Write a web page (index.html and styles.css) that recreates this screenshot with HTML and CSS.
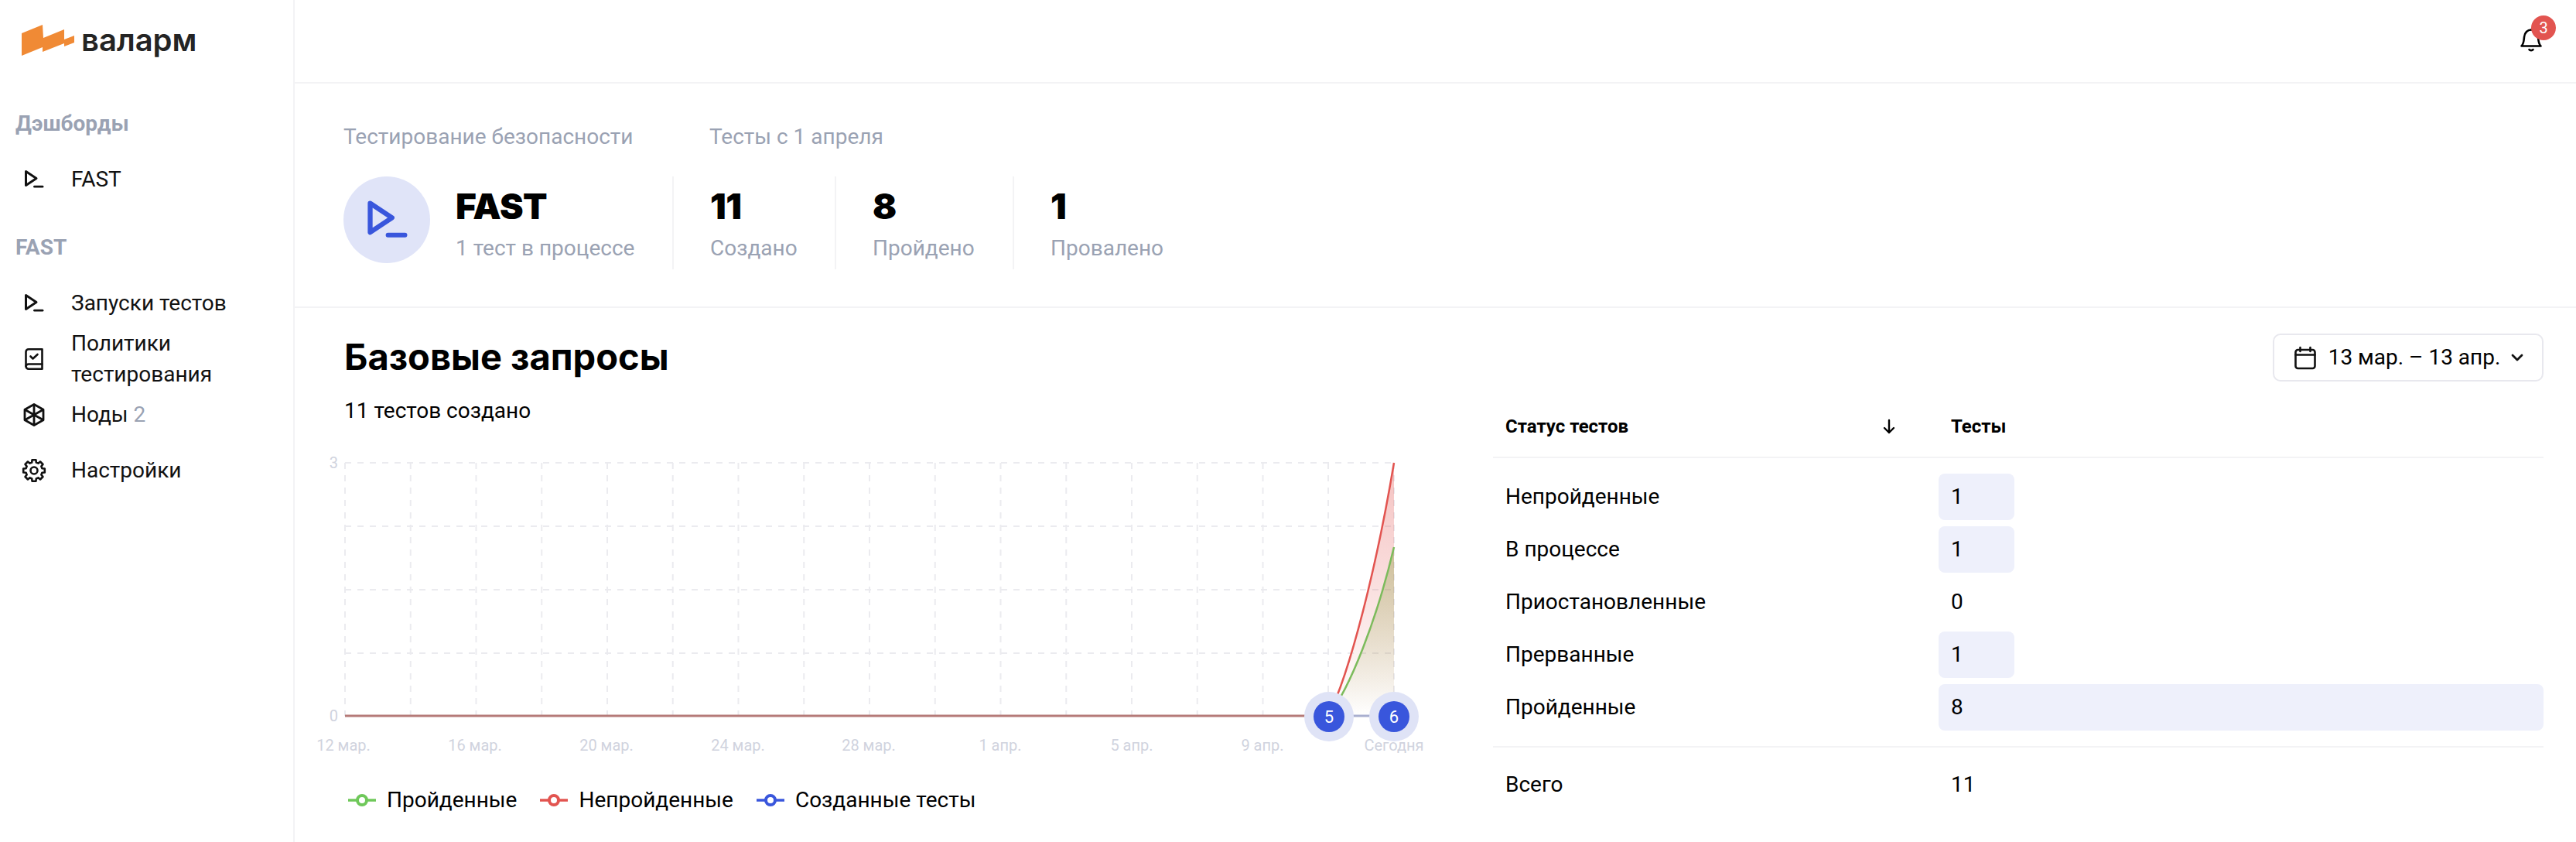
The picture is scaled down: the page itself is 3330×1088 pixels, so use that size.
FILE: index.html
```html
<!DOCTYPE html>
<html lang="ru">
<head>
    <meta charset="UTF-8">
    <meta name="viewport" content="width=device-width, initial-scale=1.0">
    <title>Валарм FAST</title>
    <link rel="stylesheet" href="styles.css">
</head>
<body>
    <svg class="defs" width="0" height="0">
        <symbol id="terminal" viewBox="0 0 32 32">
            <path d="M5.5 5.5 L19 14.5 L5.5 23.5 Z" fill="none" stroke="currentColor" stroke-width="3" stroke-linejoin="round"/>
            <path d="M16.5 25.2 H27" fill="none" stroke="currentColor" stroke-width="2.8" stroke-linecap="round"/>
        </symbol>
    </svg>

    <aside class="sidebar">
        <div class="logo">
            <svg class="logo-mark" width="68" height="40" viewBox="28 32 68 40">
                <path d="M28 43 L55 32 L56 49 L83 38 L83 51 L96 46 L96 55 L83 60 L83 56 L55 67 L55 61 L28 72 Z" fill="#f08a35"/>
            </svg>
            <span class="logo-text">валарм</span>
        </div>

        <div class="nav-title">Дэшборды</div>
        <a class="nav-item">
            <svg class="nav-icon"><use href="#terminal"/></svg>
            <span>FAST</span>
        </a>

        <div class="nav-title nav-title-next">FAST</div>
        <a class="nav-item">
            <svg class="nav-icon"><use href="#terminal"/></svg>
            <span>Запуски тестов</span>
        </a>
        <a class="nav-item">
            <svg class="nav-icon" viewBox="0 0 32 32" fill="none" stroke="currentColor" stroke-width="2.6" stroke-linejoin="round" stroke-linecap="round">
                <path d="M9 3.2 H26.5 V28.8 H9 A3.5 3.5 0 0 1 5.5 25.3 V6.7 A3.5 3.5 0 0 1 9 3.2 Z"/>
                <path d="M5.5 25.3 A3.5 3.5 0 0 1 9 22.5 H26.5"/>
                <path d="M11.5 12.5 L14.5 15.5 L20.5 10"/>
            </svg>
            <span>Политики тестирования</span>
        </a>
        <a class="nav-item">
            <svg class="nav-icon" viewBox="0 0 32 32" fill="none" stroke="currentColor" stroke-width="2.8" stroke-linejoin="round">
                <path d="M16 2.5 L28 9.2 V22.8 L16 29.5 L4 22.8 V9.2 Z"/>
                <path d="M16 2.5 V29.5 M4 9.2 L28 22.8 M28 9.2 L4 22.8"/>
            </svg>
            <span>Ноды <span class="muted">2</span></span>
        </a>
        <a class="nav-item">
            <svg class="nav-icon" viewBox="0 0 32 32" fill="none" stroke="currentColor" stroke-width="2.6" stroke-linejoin="round">
                <path d="M13.2 5.57 L13.57 2.21 H18.43 L18.8 5.57 L21.4 6.65 L24.03 4.53 L27.47 7.97 L25.35 10.6 L26.43 13.2 L29.79 13.57 V18.43 L26.43 18.8 L25.35 21.4 L27.47 24.03 L24.03 27.47 L21.4 25.35 L18.8 26.43 L18.43 29.79 H13.57 L13.2 26.43 L10.6 25.35 L7.97 27.47 L4.53 24.03 L6.65 21.4 L5.57 18.8 L2.21 18.43 V13.57 L5.57 13.2 L6.65 10.6 L4.53 7.97 L7.97 4.53 L10.6 6.65 Z"/>
                <circle cx="16" cy="16" r="4.5"/>
            </svg>
            <span>Настройки</span>
        </a>
    </aside>

    <main class="main">
        <header class="topbar">
            <div class="bell">
                <svg width="34" height="34" viewBox="0 0 34 34" fill="none" stroke="#000" stroke-width="2.6" stroke-linejoin="round" stroke-linecap="round">
                    <path d="M4.5 26.5 H29.5 C26.5 24 26.5 20 26 15 C25.5 9 21.5 5.5 17 5.5 C12.5 5.5 8.5 9 8 15 C7.5 20 7.5 24 4.5 26.5 Z"/>
                    <path d="M14.5 31 C15.5 32.5 18.5 32.5 19.5 31"/>
                </svg>
                <span class="badge">3</span>
            </div>
        </header>

        <section class="stats">
            <div class="stats-group">
                <div class="stats-label">Тестирование безопасности</div>
                <div class="tile">
                    <div class="tile-circle">
                        <svg width="67" height="67"><use href="#terminal"/></svg>
                    </div>
                    <div class="tile-text">
                        <div class="stat-value">FAST</div>
                        <div class="stat-sub">1 тест в процессе</div>
                    </div>
                </div>
            </div>
            <div class="stats-group">
                <div class="stats-label stats-label-tests">Тесты с 1 апреля</div>
                <div class="stat-row">
                    <div class="stat">
                        <div class="stat-value">11</div>
                        <div class="stat-sub">Создано</div>
                    </div>
                    <div class="stat">
                        <div class="stat-value">8</div>
                        <div class="stat-sub">Пройдено</div>
                    </div>
                    <div class="stat stat-last">
                        <div class="stat-value">1</div>
                        <div class="stat-sub">Провалено</div>
                    </div>
                </div>
            </div>
        </section>

        <section class="content">
            <div class="content-head">
                <h1>Базовые запросы</h1>
                <button class="date-btn">
                    <svg width="32" height="32" viewBox="0 0 32 32" fill="none" stroke="#111" stroke-width="2.6" stroke-linecap="round" stroke-linejoin="round">
                        <rect x="3.5" y="6" width="25" height="24" rx="3"/>
                        <path d="M3.5 12.5 H28.5 M9.5 3 V8 M22.5 3 V8"/>
                    </svg>
                    <span>13 мар. – 13 апр.</span>
                    <svg class="chevron" width="16" height="10" viewBox="0 0 16 10" fill="none" stroke="#111" stroke-width="2.8" stroke-linecap="round" stroke-linejoin="round">
                        <path d="M2 2 L8 8 L14 2"/>
                    </svg>
                </button>
            </div>

            <div class="columns">
                <div class="chart-col">
                    <div class="chart-title">11 тестов создано</div>
                    <svg class="chart" width="1400" height="430" viewBox="445 551 1400 430">
                        <defs>
                            <linearGradient id="redFill" x1="0" y1="598" x2="0" y2="925" gradientUnits="userSpaceOnUse">
                                <stop offset="0" stop-color="#e25450" stop-opacity="0.36"/>
                                <stop offset="1" stop-color="#e25450" stop-opacity="0"/>
                            </linearGradient>
                            <linearGradient id="greenFill" x1="0" y1="707" x2="0" y2="925" gradientUnits="userSpaceOnUse">
                                <stop offset="0" stop-color="#8a9a3c" stop-opacity="0.4"/>
                                <stop offset="1" stop-color="#8a9a3c" stop-opacity="0"/>
                            </linearGradient>
                        </defs>

                        <g class="grid">
                            <path d="M446 598 H1802 M446 680 H1802 M446 762 H1802 M446 844 H1802"/>
                            <path d="M446 598 V925 M530.75 598 V925 M615.5 598 V925 M700.25 598 V925 M785 598 V925 M869.75 598 V925 M954.5 598 V925 M1039.25 598 V925 M1124 598 V925 M1208.75 598 V925 M1293.5 598 V925 M1378.25 598 V925 M1463 598 V925 M1547.75 598 V925 M1632.5 598 V925 M1717 598 V925 M1802 598 V925"/>
                        </g>

                        <path d="M1717 925 C1745 870 1780 730 1802 598 V925 Z" fill="url(#redFill)"/>
                        <path d="M1717 925 C1745 890 1780 800 1802 707 V925 Z" fill="url(#greenFill)"/>

                        <path class="zero-line" d="M446 925 H1717"/>
                        <path class="zero-line-end" d="M1717 925 H1802"/>
                        <path class="line-red" d="M1717 925 C1745 870 1780 730 1802 598"/>
                        <path class="line-green" d="M1717 925 C1745 890 1780 800 1802 707"/>

                        <g class="y-labels">
                            <text x="437" y="605">3</text>
                            <text x="437" y="932">0</text>
                        </g>
                        <g class="x-labels">
                            <text x="444" y="970">12 мар.</text>
                            <text x="614" y="970">16 мар.</text>
                            <text x="784" y="970">20 мар.</text>
                            <text x="954" y="970">24 мар.</text>
                            <text x="1123" y="970">28 мар.</text>
                            <text x="1293" y="970">1 апр.</text>
                            <text x="1463" y="970">5 апр.</text>
                            <text x="1632" y="970">9 апр.</text>
                            <text x="1802" y="970">Сегодня</text>
                        </g>

                        <circle class="halo" cx="1718" cy="926" r="32"/>
                        <circle class="dot" cx="1718" cy="926" r="20"/>
                        <text class="dot-label" x="1718" y="934">5</text>
                        <circle class="halo" cx="1802" cy="926" r="32"/>
                        <circle class="dot" cx="1802" cy="926" r="20"/>
                        <text class="dot-label" x="1802" y="934">6</text>
                    </svg>

                    <div class="legend">
                        <div class="legend-item">
                            <svg class="legend-mark legend-green" width="36" height="16"><path d="M0 8 H36"/><circle cx="18" cy="8" r="6"/></svg>
                            <span>Пройденные</span>
                        </div>
                        <div class="legend-item">
                            <svg class="legend-mark legend-red" width="36" height="16"><path d="M0 8 H36"/><circle cx="18" cy="8" r="6"/></svg>
                            <span>Непройденные</span>
                        </div>
                        <div class="legend-item">
                            <svg class="legend-mark legend-blue" width="36" height="16"><path d="M0 8 H36"/><circle cx="18" cy="8" r="6"/></svg>
                            <span>Созданные тесты</span>
                        </div>
                    </div>
                </div>

                <div class="table-col">
                    <div class="table-head">
                        <div class="col-name">
                            <span>Статус тестов</span>
                            <svg width="16" height="20" viewBox="0 0 16 20" fill="none" stroke="#000" stroke-width="2.4" stroke-linecap="round" stroke-linejoin="round">
                                <path d="M8 2 V18 M2 12 L8 18 L14 12"/>
                            </svg>
                        </div>
                        <div class="col-value">Тесты</div>
                    </div>

                    <div class="table-rows">
                        <div class="table-row">
                            <div class="col-name">Непройденные</div>
                            <div class="col-value"><div class="bar" style="width: 12.5%"></div><span>1</span></div>
                        </div>
                        <div class="table-row">
                            <div class="col-name">В процессе</div>
                            <div class="col-value"><div class="bar" style="width: 12.5%"></div><span>1</span></div>
                        </div>
                        <div class="table-row">
                            <div class="col-name">Приостановленные</div>
                            <div class="col-value"><span>0</span></div>
                        </div>
                        <div class="table-row">
                            <div class="col-name">Прерванные</div>
                            <div class="col-value"><div class="bar" style="width: 12.5%"></div><span>1</span></div>
                        </div>
                        <div class="table-row">
                            <div class="col-name">Пройденные</div>
                            <div class="col-value"><div class="bar" style="width: 100%"></div><span>8</span></div>
                        </div>
                    </div>

                    <div class="table-foot">
                        <div class="col-name">Всего</div>
                        <div class="col-value">11</div>
                    </div>
                </div>
            </div>
        </section>
    </main>
</body>
</html>
```

FILE: styles.css
```css
* {
    box-sizing: border-box;
}
body {
    margin: 0;
    height: 1088px;
    overflow: hidden;
    display: flex;
    font-family: Roboto, sans-serif;
    font-size: 28px;
    line-height: 40px;
    color: #000;
    background-color: #fff;
}
.defs {
    position: absolute;
}
.muted {
    color: #9aa2b3;
}

/* sidebar */
.sidebar {
    width: 381px;
    flex: none;
    border-right: 2px solid #f3f3f5;
}
.logo {
    height: 109px;
    margin-bottom: 31px;
    padding: 32px 0 0 28px;
    display: flex;
    align-items: flex-start;
    gap: 9px;
}
.logo-text {
    font-family: Inter, sans-serif;
    font-size: 40px;
    font-weight: 600;
    line-height: 40px;
    color: #242424;
}
.nav-title {
    padding-left: 20px;
    margin-bottom: 16px;
    font-weight: 700;
    color: #9aa2b3;
}
.nav-title-next {
    margin-top: 32px;
}
.nav-item {
    height: 72px;
    padding: 0 32px 0 28px;
    display: flex;
    align-items: center;
    gap: 32px;
    color: #111;
}
.nav-icon {
    width: 32px;
    height: 32px;
    flex: none;
}

/* top bar */
.main {
    flex: 1;
    min-width: 0;
}
.topbar {
    height: 108px;
    border-bottom: 2px solid #f3f3f5;
    padding: 33px 0 0 2874px;
}
.bell {
    position: relative;
    width: 34px;
    height: 34px;
}
.badge {
    position: absolute;
    top: -13px;
    left: 17px;
    width: 32px;
    height: 32px;
    border-radius: 50%;
    background-color: #e25450;
    color: #fff;
    font-size: 20px;
    line-height: 32px;
    text-align: center;
}

/* stats */
.stats {
    height: 290px;
    padding: 49px 0 0 63px;
    border-bottom: 2px solid #f3f3f5;
    display: flex;
}
.stats-label {
    margin-bottom: 31px;
    color: #9aa2b3;
}
.stats-label-tests {
    padding-left: 46px;
}
.tile {
    width: 427px;
    height: 120px;
    border-right: 2px solid #f3f3f5;
    display: flex;
    gap: 33px;
}
.tile-circle {
    width: 112px;
    height: 112px;
    border-radius: 50%;
    background-color: #e0e4f8;
    color: #3956dc;
    display: flex;
    align-items: center;
    justify-content: center;
}
.tile-text {
    padding-top: 10px;
}
.stat-value {
    font-family: Inter, sans-serif;
    font-size: 46px;
    font-weight: 900;
    letter-spacing: -0.5px;
    line-height: 56px;
    margin-bottom: 7px;
}
.stat-sub {
    color: #9aa2b3;
}
.stat-row {
    display: flex;
}
.stat {
    height: 120px;
    width: 210px;
    padding: 10px 0 0 47px;
    border-right: 2px solid #f3f3f5;
}
.stat:nth-child(2) {
    width: 230px;
}
.stat-last {
    border-right: none;
}

/* content */
.content {
    padding: 33px 42px 0 64px;
}
.content-head {
    display: flex;
    justify-content: space-between;
    margin-bottom: 18px;
}
h1 {
    margin: 0;
    font-family: Inter, sans-serif;
    font-size: 47px;
    font-weight: 700;
    line-height: 60px;
}
.date-btn {
    width: 350px;
    height: 62px;
    padding: 0 24px;
    border: 2px solid #e8e8ee;
    border-radius: 10px;
    background-color: #fff;
    display: flex;
    align-items: center;
    justify-content: space-between;
    font: inherit;
    color: #000;
}
.columns {
    display: grid;
    grid-template-columns: 1485px 1fr;
}

/* chart */
.chart {
    display: block;
    overflow: visible;
    font-family: Roboto, sans-serif;
    font-size: 20px;
}
.grid path {
    fill: none;
    stroke: #ebebef;
    stroke-width: 2;
    stroke-dasharray: 8 8;
}
.zero-line {
    fill: none;
    stroke: #b57a78;
    stroke-width: 3;
}
.zero-line-end {
    fill: none;
    stroke: #a9afcf;
    stroke-width: 3;
}
.line-red {
    fill: none;
    stroke: #e25450;
    stroke-width: 2.5;
}
.line-green {
    fill: none;
    stroke: #7cbb5c;
    stroke-width: 2.5;
}
.y-labels text {
    fill: #d0d3de;
    text-anchor: end;
}
.x-labels text {
    fill: #d0d3de;
    text-anchor: middle;
}
.halo {
    fill: #dfe3f6;
}
.dot {
    fill: #3956dc;
}
.dot-label {
    fill: #fff;
    font-size: 22px;
    text-anchor: middle;
}
.legend {
    margin-top: 33px;
    padding-left: 5px;
    display: flex;
    gap: 30px;
}
.legend-item {
    display: flex;
    align-items: center;
    gap: 14px;
}
.legend-mark path {
    stroke-width: 3.5;
}
.legend-mark circle {
    fill: #fff;
    stroke-width: 4;
}
.legend-green path, .legend-green circle {
    stroke: #6fc85a;
}
.legend-red path, .legend-red circle {
    stroke: #e25450;
}
.legend-blue path, .legend-blue circle {
    stroke: #3956dc;
}

/* table */
.table-head, .table-row, .table-foot {
    display: grid;
    grid-template-columns: 576px 1fr;
}
.table-head {
    height: 81px;
    border-bottom: 2px solid #f3f3f5;
    align-items: center;
    font-size: 24px;
    font-weight: 700;
}
.table-head .col-name {
    display: flex;
    justify-content: space-between;
    align-items: center;
    padding-right: 56px;
}
.col-name {
    padding-left: 16px;
}
.table-rows {
    padding: 20px 0 20px;
    display: flex;
    flex-direction: column;
    gap: 8px;
}
.table-row {
    height: 60px;
    align-items: center;
}
.table-row .col-value {
    position: relative;
    height: 60px;
    line-height: 60px;
}
.table-row .col-value span {
    position: relative;
}
.table-row .col-value span, .table-head .col-value, .table-foot .col-value {
    padding-left: 16px;
}
.bar {
    position: absolute;
    top: 0;
    left: 0;
    height: 60px;
    border-radius: 8px;
    background-color: #eef0fb;
}
.table-foot {
    border-top: 2px solid #f3f3f5;
    padding-top: 28px;
}
```
